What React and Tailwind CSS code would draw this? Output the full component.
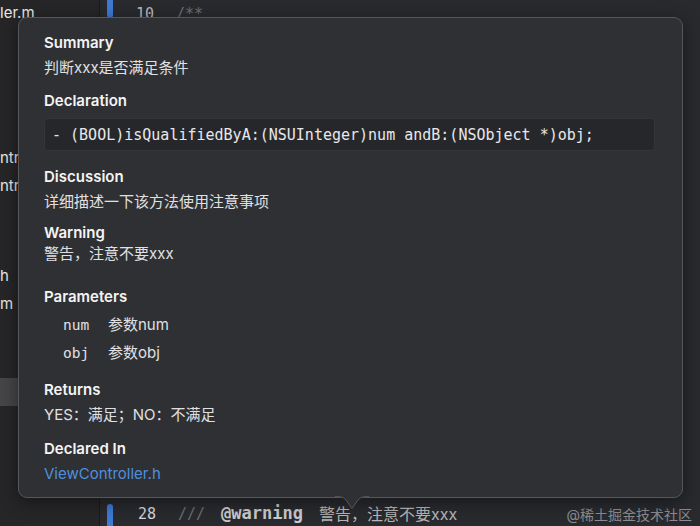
export default function App() {
  const sans = { fontFamily: "Inter, 'Noto Sans CJK SC', sans-serif" };
  const mono = "font-['DejaVu_Sans_Mono',monospace]";

  return (
    <div
      className="relative w-[700px] h-[526px] overflow-hidden bg-[#292a2e] flex text-[15px]"
      style={sans}
    >
      {/* file navigator */}
      <div className="w-[100px] h-full bg-[#262628] border-r border-[#1b1b1d] flex flex-col text-[#e8e8e8] text-[15px] leading-[28px]">
        <div className="-mt-[1px]">ler.m</div>
        <div className="mt-[117px]">ntr</div>
        <div>ntr</div>
        <div className="mt-[62px]">h</div>
        <div>m</div>
        <div className="mt-[60px] h-[28px] bg-[#464648]"></div>
      </div>

      {/* gutter bar */}
      <div className="w-[6px] ml-[7px] h-full flex flex-col justify-between">
        <div className="h-[18px] bg-[#3e7ad4] rounded-b-sm"></div>
        <div className="h-[22px] bg-[#3e7ad4] rounded-t-sm"></div>
      </div>

      {/* editor */}
      <div className={`flex-1 h-full flex flex-col justify-between text-[15px] ${mono}`}>
        <div className="flex items-center h-[28px] text-[#8a8b8f]">
          <span className="w-[21px] ml-[20px] text-right text-[#b8b9bc]">10</span>
          <span className="ml-[22px] text-[#6d6e72]">/**</span>
        </div>
        <div className="flex items-center h-[28px] -mb-[2px]">
          <span className="w-[21px] ml-[22px] text-right text-[#d8d8da]">28</span>
          <span className="ml-[22px] text-[#6d6e72]">///</span>
          <span className="ml-[16px] font-bold text-[17px] text-[#c9cacd]">@warning</span>
          <span className="ml-[16px] text-[16px] text-[#b5b6b9]" style={sans}>警告，注意不要xxx</span>
          <span className="ml-auto mr-[8px] text-[14px] text-[#8b8c90]" style={sans}>@稀土掘金技术社区</span>
        </div>
      </div>

      {/* quick help popover */}
      <div className="absolute left-[18px] top-[17px] w-[665px] h-[481px] rounded-[9px] border border-[#55575b] bg-[#2f3034] shadow-[0_4px_18px_rgba(0,0,0,0.45)] pl-[25px] pr-[27px] pt-[15px] leading-[20px]">
        <div className="font-semibold text-[#f4f4f4]">Summary</div>
        <div className="mt-[5px] text-[#e0e0e2]">判断xxx是否满足条件</div>

        <div className="mt-[13px] font-semibold text-[#f4f4f4]">Declaration</div>
        <div className={`mt-[7px] h-[33px] rounded-[4px] bg-[#26272a] border border-[#34353a] flex items-center pl-[7px] text-[15px] text-[#e8e8ea] ${mono}`}>
          - (BOOL)isQualifiedByA:(NSUInteger)num andB:(NSObject *)obj;
        </div>

        <div className="mt-[16px] font-semibold text-[#f4f4f4]">Discussion</div>
        <div className="mt-[5px] text-[#e0e0e2]">详细描述一下该方法使用注意事项</div>

        <div className="mt-[11px] font-semibold text-[#f4f4f4]">Warning</div>
        <div className="mt-[1px] text-[#e0e0e2]">警告，注意不要xxx</div>

        <div className="mt-[23px] font-semibold text-[#f4f4f4]">Parameters</div>
        <div className="mt-[8px] flex text-[#e0e0e2]">
          <span className={`w-[45px] ml-[19px] text-[14.5px] ${mono}`}>num</span>
          <span>参数num</span>
        </div>
        <div className="mt-[8px] flex text-[#e0e0e2]">
          <span className={`w-[45px] ml-[19px] text-[14.5px] ${mono}`}>obj</span>
          <span>参数obj</span>
        </div>

        <div className="mt-[17px] font-semibold text-[#f4f4f4]">Returns</div>
        <div className="mt-[5px] text-[#e0e0e2]">YES：满足；NO：不满足</div>

        <div className="mt-[14px] font-semibold text-[#f4f4f4]">Declared In</div>
        <div className="mt-[5px] text-[#4f8fdc]">ViewController.h</div>

        {/* arrow */}
        <svg
          className="absolute left-[316px] -bottom-[13px]"
          width="34"
          height="14"
          viewBox="0 0 34 14"
        >
          <path d="M0 0.5 C6 0.5 8 1 11 4 L17 12.5 L23 4 C26 1 28 0.5 34 0.5 Z" fill="#2f3034" />
          <path d="M0 0.5 C6 0.5 8 1 11 4 L17 12.5 L23 4 C26 1 28 0.5 34 0.5" fill="none" stroke="#55575b" strokeWidth="1" />
        </svg>
      </div>
    </div>
  );
}
